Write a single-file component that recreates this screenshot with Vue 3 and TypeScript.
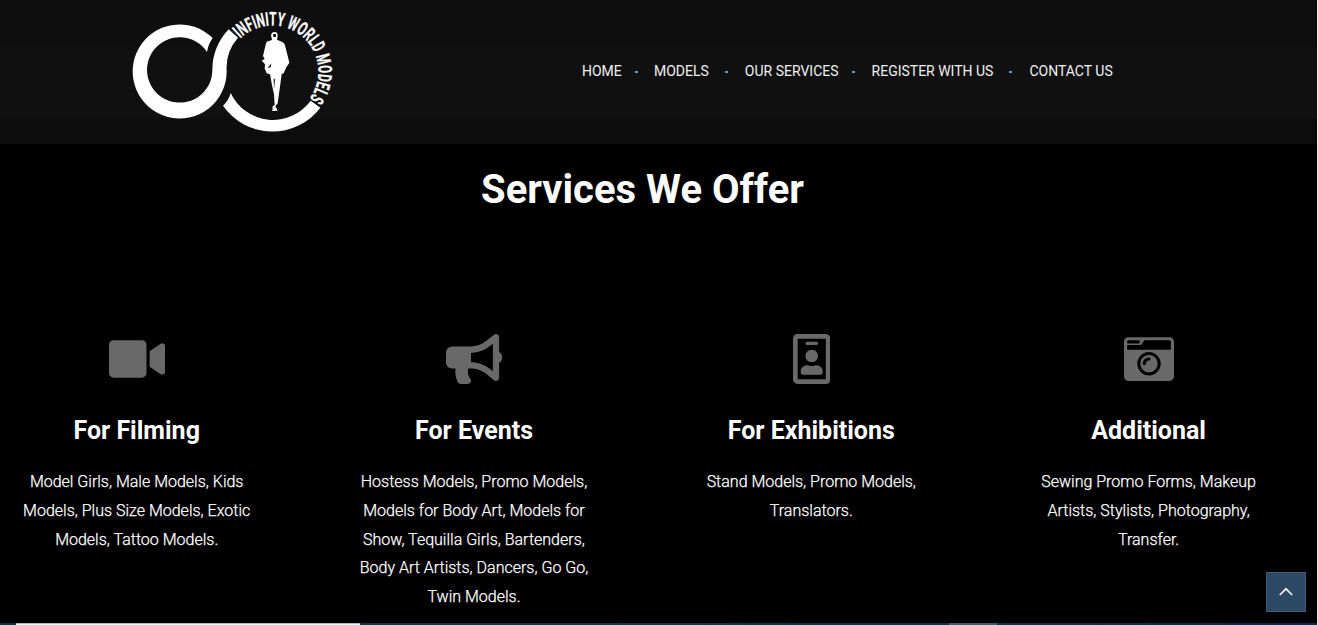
<script setup lang="ts">
import { ref } from "vue";

interface Service {
    title: string;
    text: string;
    width: number;
    path: string;
}

const menu = ref<string[]>(["Home", "Models", "Our Services", "Register With Us", "Contact Us"]);

const services = ref<Service[]>([
    {
        title: "For Filming",
        text: "Model Girls, Male Models, Kids Models, Plus Size Models, Exotic Models, Tattoo Models.",
        width: 576,
        path: "M336.2 64H47.8C21.4 64 0 85.4 0 111.8v288.4C0 426.6 21.4 448 47.8 448h288.4c26.4 0 47.8-21.4 47.8-47.8V111.8c0-26.4-21.4-47.8-47.8-47.8zm189.4 37.7L416 177.3v157.4l109.6 75.5c21.2 14.6 50.4-.3 50.4-25.8V127.5c0-25.4-29.1-40.4-50.4-25.8z",
    },
    {
        title: "For Events",
        text: "Hostess Models, Promo Models, Models for Body Art, Models for Show, Tequilla Girls, Bartenders, Body Art Artists, Dancers, Go Go, Twin Models.",
        width: 576,
        path: "M576 240c0-23.63-12.95-44.04-32-55.12V32.01C544 23.26 537.02 0 512 0c-7.12 0-14.19 2.38-19.98 7.02l-85.03 68.03C364.28 109.19 310.66 128 256 128H64c-35.35 0-64 28.65-64 64v96c0 35.35 28.65 64 64 64h33.7c-1.39 10.48-2.18 21.14-2.18 32 0 39.77 9.26 77.35 25.56 110.94 5.19 10.69 16.52 17.06 28.4 17.06h74.28c26.05 0 41.69-29.84 25.9-50.56-16.4-21.52-26.15-48.36-26.15-77.44 0-11.11 1.62-21.79 4.41-32H256c54.66 0 108.28 18.81 150.98 52.95l85.03 68.03a32.023 32.023 0 0 0 19.98 7.02c24.92 0 32-22.78 32-32V295.13C563.05 284.04 576 263.63 576 240zm-96 141.42l-33.05-26.44C392.95 311.78 325.12 288 256 288v-96c69.12 0 136.95-23.78 190.95-66.98L480 98.58v282.84z",
    },
    {
        title: "For Exhibitions",
        text: "Stand Models, Promo Models, Translators.",
        width: 384,
        path: "M336 0H48C21.5 0 0 21.5 0 48v416c0 26.5 21.5 48 48 48h288c26.5 0 48-21.5 48-48V48c0-26.5-21.5-48-48-48zm0 464H48V48h288v416zM144 112h96c8.8 0 16-7.2 16-16s-7.2-16-16-16h-96c-8.8 0-16 7.2-16 16s7.2 16 16 16zm48 176c35.3 0 64-28.7 64-64s-28.7-64-64-64-64 28.7-64 64 28.7 64 64 64zm-89.6 128h179.2c12.4 0 22.4-8.6 22.4-19.2v-19.2c0-31.8-30.1-57.6-67.2-57.6-10.8 0-18.7 8-44.8 8-26.9 0-33.4-8-44.8-8-37.1 0-67.2 25.8-67.2 57.6v19.2c0 10.6 10 19.2 22.4 19.2z",
    },
    {
        title: "Additional",
        text: "Sewing Promo Forms, Makeup Artists, Stylists, Photography, Transfer.",
        width: 512,
        path: "M48 32C21.5 32 0 53.5 0 80v352c0 26.5 21.5 48 48 48h416c26.5 0 48-21.5 48-48V80c0-26.5-21.5-48-48-48H48zm0 32h106c3.3 0 6 2.7 6 6v20c0 3.3-2.7 6-6 6H38c-3.3 0-6-2.7-6-6V80c0-8.8 7.2-16 16-16zm426 96H38c-3.3 0-6-2.7-6-6v-36c0-3.3 2.7-6 6-6h138l30.2-45.3c1.1-1.7 3-2.7 5-2.7H464c8.8 0 16 7.2 16 16v74c0 3.3-2.7 6-6 6zM256 424c-66.2 0-120-53.8-120-120s53.8-120 120-120 120 53.8 120 120-53.8 120-120 120zm0-208c-48.5 0-88 39.5-88 88s39.5 88 88 88 88-39.5 88-88-39.5-88-88-88zm-48 104c-8.8 0-16-7.2-16-16 0-35.3 28.7-64 64-64 8.8 0 16 7.2 16 16s-7.2 16-16 16c-17.6 0-32 14.4-32 32 0 8.8-7.2 16-16 16z",
    },
]);

function toTop() {
    window.scrollTo({ top: 0, behavior: "smooth" });
}
</script>

<template>
    <div class="page">
        <header class="header">
            <svg class="logo" viewBox="-1 -1 690 432">
                <defs>
                    <path id="ring" d="M356.8 118.1A138 138 0 1 1 544.7 319.7" />
                </defs>
                <path d="M277 113A141 141 0 1 0 319 213A138 138 0 0 1 353 112L325 87A180 180 0 0 0 276 213A98 98 0 1 1 260 155Q264 131 277 113Z" />
                <path d="M308 316Q326 299 331 278A140 140 0 0 0 571 301L600 322A180 180 0 0 1 308 316Z" />
                <text class="logoText">
                    <textPath href="#ring" startOffset="4" textLength="411" lengthAdjust="spacingAndGlyphs">INFINITY WORLD MODELS</textPath>
                </text>
                <!-- walking figure -->
                <path fill-rule="evenodd" d="M455 119L452 105Q454 95 463 95Q473 96 472 107L470 118L484 124Q493 127 495 139L502 166L507 187L498 201L490 219L484 221L480 252L472 309L465 318L472 331L456 332L457 318L463 314L461 282L455 255L449 222L439 219L433 204L434 192L424 181L433 176L428 167L435 137L439 124ZM459 101Q457 105 460 110L467 110Q468 102 465 100ZM442 204L453 189L451 201ZM460 233L461 267L464 238Z" />
            </svg>
            <nav class="menu">
                <a v-for="item in menu" :key="item" class="menuItem">{{ item }}</a>
            </nav>
        </header>

        <main>
            <h1>Services We Offer</h1>
            <div class="services">
                <section v-for="s in services" :key="s.title" class="service">
                    <svg class="icon" :viewBox="`0 0 ${s.width} 512`" :style="{ width: (s.width * 50) / 512 + 'px' }">
                        <path :d="s.path" />
                    </svg>
                    <h3>{{ s.title }}</h3>
                    <p>{{ s.text }}</p>
                </section>
            </div>
        </main>

        <button class="toTop" aria-label="Back to top" @click="toTop()">
            <svg viewBox="0 0 14 9"><path d="M.8 8L7 1.8L13.2 8" /></svg>
        </button>
        <div class="bottomBar">
            <span class="status"></span>
            <span class="thumb"></span>
        </div>
    </div>
</template>

<style>
body {
    margin: 0;
    background: #000;
}
</style>

<style scoped>
.page {
    position: relative;
    box-sizing: border-box;
    height: 625px;
    overflow: hidden;
    background: #000;
    border-right: 1px solid #e6e6e6;
    color: #fff;
    font-family: Roboto, sans-serif;
}

.header {
    display: flex;
    align-items: flex-start;
    height: 144px;
    background: linear-gradient(#0e0e0e 0 47px, #101010 47px 119px, #0c0c0c 119px);
}

.logo {
    width: 230px;
    height: 144px;
    margin-left: 120px;
    fill: #fff;
}

.logoText {
    font-size: 57px;
    font-weight: 700;
    stroke: #fff;
    stroke-width: 0.8px;
}

.menu {
    display: flex;
    margin: 61px 0 0 232px;
    font-size: 14px;
    line-height: 20px;
    text-transform: uppercase;
    color: #f0f0f0;
}

.menuItem {
    display: flex;
    align-items: center;
    white-space: nowrap;
}

.menuItem:not(:last-child)::after {
    content: "";
    width: 3px;
    height: 2px;
    margin: 2px 17px 0 13px;
    background: #5b9bd8;
}

.menuItem:first-child:not(:last-child)::after {
    margin-right: 16.2px;
}

.menuItem:nth-child(even):not(:last-child)::after {
    margin-left: 16px;
}

h1 {
    margin: 22px 0 0;
    padding-right: 32px;
    font-size: 40px;
    line-height: 48px;
    text-align: center;
}

.services {
    display: grid;
    grid-template-columns: repeat(4, 237px);
    column-gap: 100.3px;
    margin: 120px 0 0 18.2px;
}

.service {
    display: flex;
    flex-direction: column;
    align-items: center;
    text-align: center;
}

.icon {
    height: 50px;
    fill: #696969;
}

h3 {
    margin: 32px 0 0;
    font-size: 25px;
    line-height: 30px;
}

p {
    margin: 22px 0 0;
    font-size: 16px;
    font-weight: 300;
    line-height: 28.8px;
    -webkit-text-stroke: 0.25px #fff;
}

.toTop {
    position: absolute;
    right: 11px;
    top: 572px;
    display: flex;
    align-items: center;
    justify-content: center;
    width: 40px;
    height: 40px;
    padding: 0 0 2px;
    border: 1px solid #41597a;
    background: #2d4862;
}

.toTop svg {
    width: 14px;
    height: 9px;
    fill: none;
    stroke: #f2f2f2;
    stroke-width: 1.7;
}

.bottomBar {
    position: absolute;
    left: 0;
    right: -1px;
    bottom: 0;
    display: flex;
    height: 2px;
    background: linear-gradient(90deg, #182c38, #1d3440 40%, #1a2c42 75%, #1a2345);
}

.status {
    width: 344px;
    margin-left: 16px;
    background: #f2f2f2;
    border-top: 1px solid #b8b8b8;
}

.thumb {
    width: 48px;
    margin-left: 589px;
    background: #4d5666;
}
</style>
